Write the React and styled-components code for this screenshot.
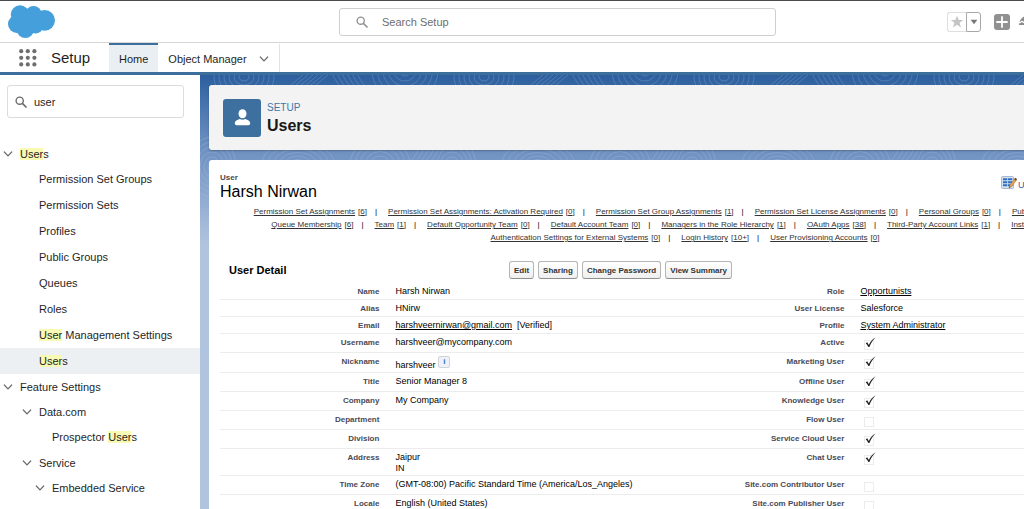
import { useState } from "react";
import styled, { createGlobalStyle } from "styled-components";

const NAV_ITEMS = [
  { text: "Users", level: 0, open: true },
  { text: "Permission Set Groups", level: 1 },
  { text: "Permission Sets", level: 1 },
  { text: "Profiles", level: 1 },
  { text: "Public Groups", level: 1 },
  { text: "Queues", level: 1 },
  { text: "Roles", level: 1 },
  { text: "User Management Settings", level: 1 },
  { text: "Users", level: 1, selected: true },
  { text: "Feature Settings", level: 0, open: true },
  { text: "Data.com", level: 1, open: true },
  { text: "Prospector Users", level: 2 },
  { text: "Service", level: 1, open: true },
  { text: "Embedded Service", level: 2, open: true },
];

const RELATED = [
  [
    ["Permission Set Assignments", "6"],
    ["Permission Set Assignments: Activation Required", "0"],
    ["Permission Set Group Assignments", "1"],
    ["Permission Set License Assignments", "0"],
    ["Personal Groups", "0"],
    ["Public Group Membership", "0"],
  ],
  [
    ["Queue Membership", "6"],
    ["Team", "1"],
    ["Default Opportunity Team", "0"],
    ["Default Account Team", "0"],
    ["Managers in the Role Hierarchy", "1"],
    ["OAuth Apps", "38"],
    ["Third-Party Account Links", "1"],
    ["Installed Mobile Apps", "0"],
  ],
  [
    ["Authentication Settings for External Systems", "0"],
    ["Login History", "10+"],
    ["User Provisioning Accounts", "0"],
  ],
];

const ROWS = [
  ["Name", "Harsh Nirwan", "Role", { link: "Opportunists" }],
  ["Alias", "HNirw", "User License", "Salesforce"],
  [
    "Email",
    { link: "harshveernirwan@gmail.com", after: "[Verified]" },
    "Profile",
    { link: "System Administrator" },
  ],
  ["Username", "harshveer@mycompany.com", "Active", true],
  ["Nickname", { info: "harshveer" }, "Marketing User", true],
  ["Title", "Senior Manager 8", "Offline User", true],
  ["Company", "My Company", "Knowledge User", true],
  ["Department", "", "Flow User", false],
  ["Division", "", "Service Cloud User", true],
  ["Address", { lines: ["Jaipur", "IN"] }, "Chat User", true],
  [
    "Time Zone",
    "(GMT-08:00) Pacific Standard Time (America/Los_Angeles)",
    "Site.com Contributor User",
    false,
  ],
  ["Locale", "English (United States)", "Site.com Publisher User", false],
];

function CloudLogo() {
  return (
    <svg width="48" height="34" viewBox="8 5 48 34" fill="#449fdb" aria-hidden="true">
      <circle cx="20" cy="14.4" r="9.2" />
      <circle cx="33.5" cy="14" r="8" />
      <circle cx="44.6" cy="20.3" r="10.4" />
      <circle cx="17" cy="24" r="9" />
      <circle cx="25.3" cy="29.4" r="8.6" />
      <circle cx="35.5" cy="26" r="7.6" />
      <circle cx="28" cy="20" r="7" />
    </svg>
  );
}

function SearchIcon() {
  return (
    <svg width="12" height="12" viewBox="0 0 12 12" fill="none" stroke="currentColor" aria-hidden="true">
      <circle cx="4.7" cy="4.7" r="3.6" strokeWidth="1.4" />
      <path d="M7.5 7.5 11 11" strokeWidth="1.7" strokeLinecap="round" />
    </svg>
  );
}

function Chevron() {
  return (
    <svg width="10" height="10" viewBox="0 0 10 10" fill="none" stroke="#6b6b6b" strokeWidth="1.2" strokeLinecap="round" aria-hidden="true">
      <path d="M1.3 3 5 6.8 8.7 3" />
    </svg>
  );
}

function Launcher() {
  return (
    <svg width="18" height="18" viewBox="0 0 18 18" fill="#6f6f6f" aria-hidden="true">
      {[2.2, 8.8, 15.4].map((y) =>
        [2.2, 8.8, 15.4].map((x) => <circle key={x + "-" + y} cx={x} cy={y} r="2.1" />)
      )}
    </svg>
  );
}

function Contours() {
  return (
    <Backdrop aria-hidden="true">
      <defs>
        <pattern id="topo" width="240" height="130" patternUnits="userSpaceOnUse">
          <g fill="none" stroke="#fff" strokeOpacity="0.2" strokeWidth="0.8">
            {[5, 10, 15, 20, 25, 30].map((r) => (
              <g key={r}>
                <ellipse cx="44" cy="2" rx={r} ry={r * 0.8} />
                <ellipse cx="205" cy="-4" rx={r * 1.1} ry={r} />
                <ellipse cx="12" cy="92" rx={r * 0.8} ry={r} />
                <ellipse cx="98" cy="88" rx={r * 1.2} ry={r * 0.7} />
                <ellipse cx="180" cy="90" rx={r} ry={r * 0.9} />
              </g>
            ))}
            {[0, 5, 10, 15, 20, 25].map((d) => (
              <path key={d} d={`M${80 + d} 18 C${90 + d} 12 ${96 + d} 5 ${108 + d} -4 M${132 + d} -2 C${136 + d} 8 ${142 + d} 14 ${150 + d} 20 M${212 + d} 96 C${204 + d} 84 ${226 + d} 78 ${216 + d} 66`} />
            ))}
          </g>
        </pattern>
      </defs>
      <rect width="100%" height="100%" fill="url(#topo)" />
    </Backdrop>
  );
}

function EditLayoutIcon() {
  return (
    <svg width="16" height="14" viewBox="0 0 16 14" aria-hidden="true">
      <rect x="0.5" y="0.5" width="12" height="12" rx="1" fill="#d7e1ee" stroke="#a9b8ca" />
      <path d="M2 2.2h4.3v2H2zM7 2.2h4.3v2H7zM2 5.2h4.3v2H2zM7 5.2h4.3v2H7zM2 8.2h4.3v2H2zM7 8.2h4.3v2H7z" fill="#2f70c6" />
      <path d="M8 11.8 9 8.9 14 2.2 15.8 3.7 10.6 10.4z" fill="#f0a848" stroke="#8a5a2a" strokeWidth="0.5" />
      <path d="M13.2 3.2 14.3 1.7 16 3.1 14.9 4.7z" fill="#5b5147" />
      <path d="M8 11.8 8.5 10.4 9.4 11.1z" fill="#333" />
    </svg>
  );
}

function Highlighted({ text }) {
  const parts = text.split(/(User)/);
  return (
    <span>
      {parts.map((part, i) => (part === "User" ? <Mark key={i}>{part}</Mark> : part))}
    </span>
  );
}

function CheckField({ label, checked }) {
  return (
    <CheckWrap>
      <CheckBox type="checkbox" aria-label={label} checked={checked} readOnly />
      {checked && (
        <Tick viewBox="0 0 12 12" aria-hidden="true">
          <path d="M0.8 6.8 2.4 5.8 4.2 8.6C6 5 8.200 2.200 11.600 0.400 8.600 3.400 6.400 6.800 4.800 11H3.700C2.900 9.200 2 7.900 0.800 6.800Z" fill="#222" />
        </Tick>
      )}
    </CheckWrap>
  );
}

function Value({ label, value }) {
  if (typeof value === "string") return value;
  if (typeof value === "boolean") return <CheckField label={label} checked={value} />;
  if (value.link) {
    return (
      <>
        <FieldLink href="#">{value.link}</FieldLink>
        {value.after && <Verified>{value.after}</Verified>}
      </>
    );
  }
  if (value.info) {
    return (
      <InfoLine>
        <span>{value.info}</span>
        <InfoButton type="button">i</InfoButton>
      </InfoLine>
    );
  }
  return value.lines.map((line) => <div key={line}>{line}</div>);
}

export default function App() {
  const [query, setQuery] = useState("user");

  return (
    <Shell>
      <GlobalStyle />
      <TopBar>
        <LogoSlot>
          <CloudLogo />
        </LogoSlot>
        <GlobalSearch>
          <SearchIcon />
          <SearchInput type="search" placeholder="Search Setup" aria-label="Search Setup" />
        </GlobalSearch>
        <Actions>
          <Favorites>
            <StarButton type="button" aria-label="Favorite">
              <svg width="14" height="14" viewBox="0 0 14 14" fill="#c4c4c4">
                <path d="M7 .8 8.7 5h4.5L9.6 7.8 11 12.5 7 9.7 3 12.5 4.4 7.8.8 5h4.5z" />
              </svg>
            </StarButton>
            <CaretButton type="button" aria-label="Favorites list">
              <svg width="8" height="6" viewBox="0 0 8 6" fill="#777">
                <path d="M.6.8h6.8L4 5.2z" />
              </svg>
            </CaretButton>
          </Favorites>
          <PlainButton type="button" aria-label="Create">
            <svg width="16" height="16" viewBox="0 0 16 16">
              <rect width="16" height="16" rx="3" fill="#919191" />
              <path d="M8 3v10M3 8h10" stroke="#fff" strokeWidth="1.8" strokeLinecap="round" />
            </svg>
          </PlainButton>
          <PlainButton type="button" aria-label="Guidance">
            <svg width="18" height="16" viewBox="0 0 18 16">
              <path d="M1 11C1 7 3.5 3 7 2c5 0 9 5 10 9z" fill="#8d8d8d" />
              <path d="M1 9 4 7.5 7 9" stroke="#fff" strokeWidth="1.2" fill="none" />
            </svg>
          </PlainButton>
        </Actions>
      </TopBar>

      <NavBar>
        <LauncherButton type="button" aria-label="App Launcher">
          <Launcher />
        </LauncherButton>
        <AppName>Setup</AppName>
        <Tab href="#" $active>
          Home
        </Tab>
        <Tab href="#">
          Object Manager
          <Chevron />
        </Tab>
      </NavBar>

      <Body>
        <Sidebar>
          <QuickFind>
            <SearchIcon />
            <SearchInput
              type="search"
              aria-label="Quick Find"
              value={query}
              onChange={(e) => setQuery(e.target.value)}
            />
          </QuickFind>
          <Tree>
            {NAV_ITEMS.map((item, idx) => (
              <li key={idx}>
                <TreeLink href="#" $level={item.level} $open={item.open} $selected={item.selected}>
                  {item.open && <Chevron />}
                  <Highlighted text={item.text} />
                </TreeLink>
              </li>
            ))}
          </Tree>
        </Sidebar>

        <Main>
          <Contours />
          <PageHeader>
            <HeaderIcon>
              <svg width="17" height="17" viewBox="0 0 17 17" fill="#fff" aria-hidden="true">
                <ellipse cx="8.5" cy="4.8" rx="4" ry="4.5" />
                <path d="M.8 14.2c0-2.600 2.700-3.400 5-4.300 1.600 1.100 3.800 1.100 5.400 0 2.300.9 5 1.700 5 4.300 0 1.300-.8 2-1.900 2H2.700c-1.100 0-1.900-.7-1.900-2z" />
              </svg>
            </HeaderIcon>
            <div>
              <Eyebrow>SETUP</Eyebrow>
              <PageTitle>Users</PageTitle>
            </div>
          </PageHeader>

          <Record>
            <RecordTop>
              <div>
                <RecordType>User</RecordType>
                <RecordName>Harsh Nirwan</RecordName>
              </div>
              <HelpLinks>
                <EditLayoutIcon />
                <a href="#">User Profile</a>
              </HelpLinks>
            </RecordTop>

            <Related>
              {RELATED.map((line, i) => (
                <RelatedLine key={i}>
                  {line.map(([name, count]) => (
                    <RelatedItem key={name}>
                      <a href="#">{name}</a>
                      <Count>[{count}]</Count>
                    </RelatedItem>
                  ))}
                </RelatedLine>
              ))}
            </Related>

            <DetailHeader>
              <DetailTitle>User Detail</DetailTitle>
              <ButtonRow>
                <DetailButton type="button">Edit</DetailButton>
                <DetailButton type="button">Sharing</DetailButton>
                <DetailButton type="button">Change Password</DetailButton>
                <DetailButton type="button">View Summary</DetailButton>
              </ButtonRow>
            </DetailHeader>

            <DetailTable>
              <colgroup>
                <LabelCol />
                <ValueCol />
                <LabelCol />
                <ValueCol />
              </colgroup>
              <tbody>
                {ROWS.map(([l1, v1, l2, v2]) => (
                  <tr key={l1}>
                    <LabelCell scope="row">{l1}</LabelCell>
                    <ValueCell>
                      <Value label={l1} value={v1} />
                    </ValueCell>
                    <LabelCell scope="row">{l2}</LabelCell>
                    <ValueCell>
                      <Value label={l2} value={v2} />
                    </ValueCell>
                  </tr>
                ))}
              </tbody>
            </DetailTable>
          </Record>
        </Main>
      </Body>
    </Shell>
  );
}

const GlobalStyle = createGlobalStyle`
  * {
    box-sizing: border-box;
  }
  body {
    margin: 0;
    background: #fff;
    color: #1f1f1f;
    font-family: "Liberation Sans", Arial, sans-serif;
    font-size: 11px;
  }
  button, input {
    font-family: inherit;
  }
  svg {
    display: block;
    flex-shrink: 0;
  }
`;

const Shell = styled.div`
  display: flex;
  flex-direction: column;
  height: 100vh;
  overflow: hidden;
`;

const TopBar = styled.header`
  display: grid;
  grid-template-columns: 331px minmax(0, 437px) 1fr;
  align-items: center;
  height: 43px;
  flex-shrink: 0;
  padding-left: 8px;
  border-top: 1px solid #4b4b4b;
  border-bottom: 1px solid #d6d6d6;
`;

const LogoSlot = styled.div`
  display: flex;
`;

const GlobalSearch = styled.label`
  display: flex;
  align-items: center;
  gap: 14px;
  height: 28px;
  padding: 0 16px;
  border: 1px solid #cfcfcf;
  border-radius: 3px;
  color: #929292;
`;

const SearchInput = styled.input`
  flex: 1;
  min-width: 0;
  padding: 0;
  border: none;
  outline: none;
  background: none;
  color: #1f1f1f;
  font-size: 11px;

  &::placeholder {
    color: #6e6e6e;
    opacity: 1;
  }
  &::-webkit-search-cancel-button {
    display: none;
  }
`;

const Actions = styled.div`
  display: flex;
  justify-content: flex-end;
  align-items: center;
  gap: 8px;
  margin-right: -12px;
`;

const PlainButton = styled.button`
  padding: 0;
  border: none;
  background: none;
`;

const Favorites = styled.div`
  display: flex;
  height: 20px;
  margin-right: 5px;
`;

const StarButton = styled.button`
  display: flex;
  align-items: center;
  justify-content: center;
  width: 19px;
  padding: 0;
  border: 1px solid #dedede;
  border-right: none;
  border-radius: 3px 0 0 3px;
  background: #fff;
`;

const CaretButton = styled.button`
  display: flex;
  align-items: center;
  justify-content: center;
  width: 15px;
  padding: 0;
  border: 1px solid #a8a8a8;
  border-radius: 0 3px 3px 0;
  background: #fff;
`;

const NavBar = styled.nav`
  display: flex;
  height: 32px;
  flex-shrink: 0;
  border-bottom: 3px solid #3c6f9c;
`;

const LauncherButton = styled(PlainButton)`
  display: flex;
  align-items: center;
  padding: 0 14px 0 19px;
`;

const AppName = styled.span`
  align-self: center;
  width: 58px;
  font-size: 15px;
`;

const Tab = styled.a`
  display: flex;
  align-items: center;
  gap: 12px;
  padding: 0 10px;
  border-top: 2px solid ${(props) => (props.$active ? "#3c6f9c" : "transparent")};
  border-right: ${(props) => (props.$active ? "none" : "1px solid #e2e2e2")};
  background: ${(props) => (props.$active ? "#e9eff3" : "none")};
  color: #1f1f1f;
  font-size: 11px;
  text-decoration: none;
`;

const Body = styled.div`
  display: flex;
  flex: 1;
  min-height: 0;
`;

const Sidebar = styled.aside`
  width: 200px;
  flex-shrink: 0;
  padding-top: 10px;
  background: #fff;
`;

const QuickFind = styled.label`
  display: flex;
  align-items: center;
  gap: 7px;
  height: 33px;
  margin: 0 16px 0 7px;
  padding: 0 7px;
  border: 1px solid #dcdcdc;
  border-radius: 3px;
  color: #6b6b6b;
`;

const Tree = styled.ul`
  margin: 23px 0 0;
  padding: 0;
  list-style: none;
`;

const TreeLink = styled.a`
  display: flex;
  align-items: center;
  gap: 7px;
  height: ${(props) => (props.$open ? "25px" : "26px")};
  padding-left: ${(props) => [20, 39, 52][props.$level] - (props.$open ? 17 : 0)}px;
  background: ${(props) => (props.$selected ? "#ecf0f2" : "none")};
  color: #1f1f1f;
  font-size: 11px;
  text-decoration: none;
  white-space: nowrap;
`;

const Mark = styled.mark`
  background: #f8fab4;
  color: inherit;
`;

const Main = styled.main`
  position: relative;
  display: flex;
  flex-direction: column;
  flex: 1;
  min-width: 0;
  padding: 10px 0 0 9px;
  overflow: hidden;
  background: linear-gradient(#2c5f9f 0, #6389bd 60px, #b1c4df 170px);
`;

const Backdrop = styled.svg`
  position: absolute;
  inset: 0;
  width: 100%;
  height: 100%;
  mask-image: linear-gradient(#000 60px, transparent 190px);
`;

const PageHeader = styled.section`
  position: relative;
  display: flex;
  align-items: center;
  gap: 6px;
  height: 65px;
  flex-shrink: 0;
  padding: 0 14px;
  border-radius: 3px 0 0 3px;
  background: #f3f3f3;
  box-shadow: 0 1px 2px rgba(0, 0, 0, 0.25);
`;

const HeaderIcon = styled.div`
  display: flex;
  align-items: center;
  justify-content: center;
  width: 38px;
  height: 38px;
  border-radius: 3px;
  background: #3d709e;
`;

const Eyebrow = styled.div`
  color: #3b77ae;
  font-size: 10px;
  line-height: 16px;
`;

const PageTitle = styled.h1`
  margin: 0;
  color: #181818;
  font-size: 16px;
  line-height: 20px;
`;

const Record = styled.section`
  position: relative;
  flex: 1;
  min-width: 952px;
  margin-top: 10px;
  padding: 12px 11px 0;
  border-radius: 3px 0 0 0;
  background: #fff;
  color: #000;
`;

const RecordTop = styled.div`
  display: flex;
  justify-content: space-between;
`;

const RecordType = styled.div`
  color: #4a4a4a;
  font-size: 8px;
  font-weight: bold;
  line-height: 12px;
`;

const RecordName = styled.h2`
  margin: 0;
  font-size: 16px;
  font-weight: normal;
  line-height: 16px;
`;

const HelpLinks = styled.div`
  display: flex;
  align-items: flex-end;
  gap: 1px;
  width: 149px;
  height: 18px;

  a {
    color: #2a5f94;
    font-size: 9px;
    text-decoration: none;
  }
`;

const Related = styled.div`
  display: flex;
  flex-direction: column;
  margin-top: 5px;
`;

const RelatedLine = styled.div`
  display: flex;
  justify-content: center;
  line-height: 13px;
`;

const RelatedItem = styled.span`
  display: flex;
  gap: 3px;
  font-size: 8px;
  white-space: nowrap;

  a {
    color: #333;
  }
  & + &:before {
    content: "|";
    margin: 0 8px;
  }
`;

const Count = styled.span`
  color: #333;
  text-decoration: underline;
`;

const DetailHeader = styled.div`
  display: flex;
  align-items: center;
  margin: 17px 0 4px;
  padding-left: 9px;
`;

const DetailTitle = styled.h3`
  width: 280px;
  margin: 0;
  font-size: 11px;
`;

const ButtonRow = styled.div`
  display: flex;
  gap: 4px;
`;

const DetailButton = styled.button`
  height: 18px;
  padding: 0 4px;
  border: 1px solid #b5b5b5;
  border-bottom-color: #8f8f8f;
  border-radius: 3px;
  background: linear-gradient(#fff, #efefef);
  color: #333;
  font-size: 8px;
  font-weight: bold;
`;

const DetailTable = styled.table`
  width: 100%;
  border-collapse: separate;
  border-spacing: 0;
  table-layout: fixed;
`;

const LabelCol = styled.col`
  width: 18%;
`;

const ValueCol = styled.col`
  width: 32%;
`;

const LabelCell = styled.th`
  height: 17px;
  padding: 3px 8px 1px 0;
  border-bottom: 1px solid #ececec;
  color: #4a4a56;
  font-size: 8px;
  line-height: 11px;
  text-align: right;
  vertical-align: top;
`;

const ValueCell = styled.td`
  height: 17px;
  padding: 3px 0 1px 8px;
  border-bottom: 1px solid #ececec;
  font-size: 9px;
  line-height: 11px;
  vertical-align: top;
`;

const FieldLink = styled.a`
  color: #000;
`;

const Verified = styled.span`
  margin-left: 5px;
`;

const InfoLine = styled.span`
  display: flex;
  align-items: flex-end;
  gap: 3px;
  height: 15px;
`;

const InfoButton = styled.button`
  align-self: flex-start;
  width: 12px;
  height: 12px;
  padding: 0;
  border: 1px solid #cfd4da;
  border-radius: 2px;
  background: #eef2f7;
  color: #2f6bc0;
  font-size: 8px;
  font-weight: bold;
  line-height: 10px;
`;

const CheckWrap = styled.span`
  position: relative;
  display: block;
  width: 17px;
  height: 14px;
  padding: 3px 0 0 4px;
`;

const CheckBox = styled.input`
  display: block;
  appearance: none;
  width: 10px;
  height: 10px;
  margin: 0;
  border: 1px solid #ececec;
  background: #fff;
`;

const Tick = styled.svg`
  position: absolute;
  top: 0;
  left: 5px;
  width: 11px;
  height: 11px;
`;
